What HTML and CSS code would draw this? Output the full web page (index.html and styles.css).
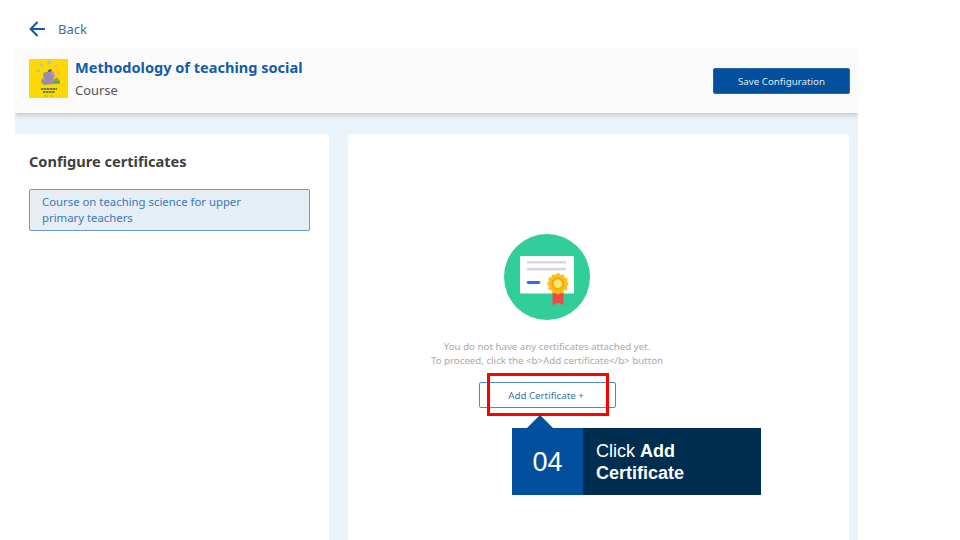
FILE: index.html
```html
<!DOCTYPE html>
<html lang="en">
<head>
<meta charset="utf-8">
<title>Configure certificates</title>
<link rel="stylesheet" href="styles.css">
</head>
<body>
<div class="app">
  <nav class="back">
    <svg class="back-icon" viewBox="0 0 18 18"><path d="M8.5 2 1.7 9l6.8 7M2 9h14" fill="none" stroke="#1259a7" stroke-width="2.1"/></svg>
    <span>Back</span>
  </nav>
  <header class="header">
    <svg class="thumb" viewBox="0 0 39 39">
      <rect width="39" height="39" fill="#fcd900"/>
      <g fill="#b6c69b"><circle cx="12.5" cy="6" r="1.8"/><circle cx="20.2" cy="3.5" r="2"/><circle cx="9.2" cy="12" r="1.8"/></g>
      <g fill="#edb77f"><circle cx="27" cy="7" r="1.8"/><circle cx="29.5" cy="14" r="1.8"/></g>
      <path d="M14 16q0-3 4-3l2-2 4 2 2 4-2 3 2 5-11 1-3-3 1-4 2 2z" fill="#9a8da7"/>
      <path d="m22 14 3-2 1 4-2 2z" fill="#e58d91"/>
      <path d="m19 11 3-1 1 2-4 1z" fill="#53627c"/>
      <path d="M24 21l4-3 3 4v3h-7z" fill="#8baa55"/>
      <path d="M25 22h5v2h-5z" fill="#609b79"/>
      <path d="M12 30h16M14 33h12" stroke="#69803c" stroke-width="2" stroke-dasharray="2.5 .5"/>
      <path d="M15 37h4m2 0h3" stroke="#b69d22" stroke-width=".8"/>
    </svg>
    <div class="heading">
      <h1>Methodology of teaching social</h1>
      <p>Course</p>
    </div>
    <button class="save">Save Configuration</button>
  </header>
  <main class="content">
    <aside class="panel side">
      <h2>Configure certificates</h2>
      <div class="course">Course on teaching science for upper<br>primary teachers</div>
    </aside>
    <section class="panel empty">
      <svg class="art" viewBox="0 0 86 86">
        <circle cx="43" cy="43" r="43" fill="#31cd9a"/>
        <rect x="16" y="22" width="54" height="37.5" rx="1.2" fill="#fff"/>
        <path d="M24 28.3h37M24 35.1h37" stroke="#d4d8e2" stroke-width="2.6" stroke-linecap="round"/>
        <path d="M24.2 48.5h10.6" stroke="#306afa" stroke-width="2.8" stroke-linecap="round"/>
        <path d="M48.5 56h11v15L54 68.8 48.5 71z" fill="#ef4b46"/>
        <circle cx="53.8" cy="49.8" r="9.3" fill="#ffc01a"/>
        <circle cx="53.8" cy="49.8" r="8.6" fill="none" stroke="#ffc01a" stroke-width="4.2" stroke-linecap="round" stroke-dasharray="0 4.503"/>
        <circle cx="53.8" cy="49.8" r="6.7" fill="#f8a90b"/>
        <circle cx="53.8" cy="49.8" r="4.2" fill="#fbe575"/>
      </svg>
      <p class="message">You do not have any certificates attached yet.<br>To proceed, click the &lt;b&gt;Add certificate&lt;/b&gt; button</p>
      <button class="add">Add Certificate +</button>
    </section>
  </main>
</div>
<div class="highlight"></div>
<div class="callout">
  <div class="step">04</div>
  <div class="instruction">Click <b>Add<br>Certificate</b></div>
</div>
</body>
</html>
```
FILE: styles.css
```css
* { box-sizing: border-box; }
body { margin: 0; height: 540px; overflow: hidden; background: #fff; font-family: "Noto Sans", sans-serif; }
h1, h2, p { margin: 0; }
button { padding: 0; font-family: inherit; }
.app { width: 843px; height: 540px; margin-left: 15px; display: flex; flex-direction: column; }
.back { height: 48px; padding: 11px 0 0 14px; display: flex; align-items: flex-start; gap: 11px; color: #3470ae; font-size: 13px; line-height: 37px; }
.back-icon { width: 18px; height: 18px; margin-top: 9px; }
.header { height: 65px; flex: none; padding: 0 8px 0 14px; display: flex; align-items: flex-start; background: #fafafa; box-shadow: 0 2px 5px rgba(0, 0, 0, .2); clip-path: inset(0 0 -12px 0); position: relative; }
.thumb { width: 39px; height: 39px; margin-top: 11px; }
.heading { flex: 1; padding: 8px 0 0 7px; }
.heading h1 { font-size: 14.55px; line-height: 22px; color: #145ba8; white-space: nowrap; }
.heading p { font-size: 12.9px; line-height: 24px; color: #555; }
.save { width: 137px; height: 26px; margin-top: 20px; border: 1px solid #2867ac; border-radius: 2px; background: #024f9d; color: #dfeaf5; font-size: 9.75px; }
.content { flex: 1; padding-top: 21px; padding-right: 9px; display: flex; gap: 19px; background: #ebf3fa; }
.panel { background: #fff; border-radius: 4px 4px 0 0; }
.side { width: 314px; padding: 15px 19px 0 14px; border-top-left-radius: 0; }
.side h2 { font-size: 14.6px; line-height: 24px; color: #404040; }
.course { height: 42px; margin-top: 16px; padding: 4px 12px; border: 1px solid #6699cc; border-radius: 2px; background: #e5edf5; color: #4079b6; font-size: 11.35px; line-height: 16px; white-space: nowrap; }
.empty { flex: 1; padding-top: 100px; padding-right: 103px; display: flex; flex-direction: column; align-items: center; }
.art { width: 86px; height: 86px; flex: none; }
.message { margin-top: 20px; font-size: 9.73px; line-height: 14px; text-align: center; color: #aaa; white-space: nowrap; }
.add { width: 137px; height: 26px; margin-top: 14px; padding-right: 2px; border: 1px solid #5489bf; border-radius: 2px; background: #fff; color: #3972ae; font-size: 9.75px; }
.highlight { position: absolute; left: 487px; top: 373px; width: 122px; height: 43px; border: 3px solid #f00; }
.callout { position: absolute; left: 512px; top: 428px; width: 249px; height: 67px; display: flex; font-family: "Liberation Sans", Arial, sans-serif; color: #fff; }
.callout::before { content: ""; position: absolute; left: 14px; top: -13px; width: 28px; height: 14px; background: #024f9d; clip-path: polygon(50% 0, 100% 100%, 0 100%); }
.step { width: 71px; background: #024f9d; font-size: 27px; line-height: 69px; text-align: center; }
.instruction { flex: 1; padding: 12px 13px; background: #002e50; font-size: 18px; line-height: 22px; }
```
